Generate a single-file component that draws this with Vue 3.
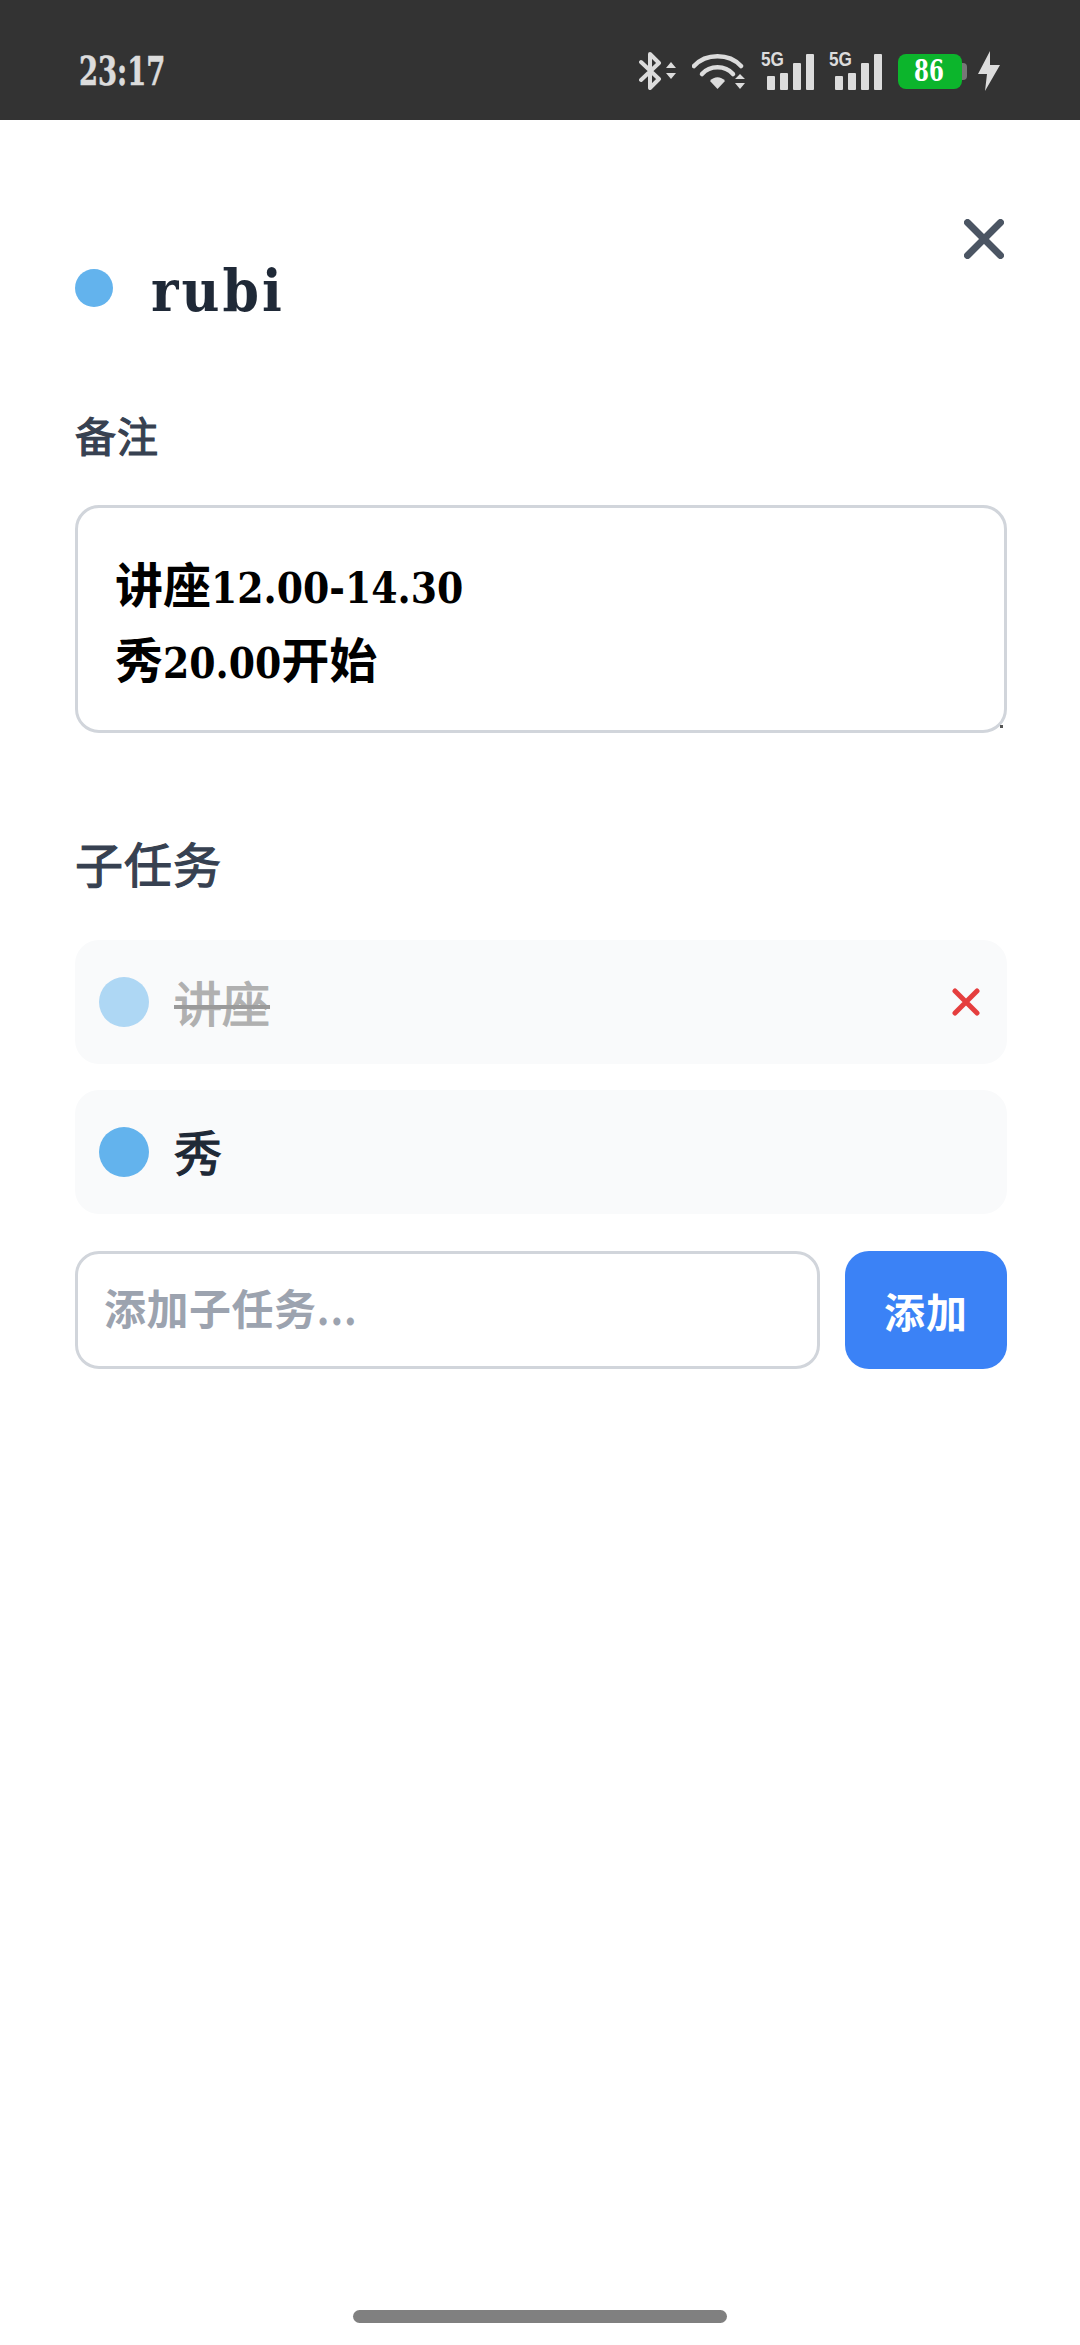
<template>
  <div class="screen">
    <div class="status-bar">
      <span class="clock">23:17</span>
      <div class="status-icons">
        <svg class="ic-bt" width="38" height="38" viewBox="0 0 38 38">
          <path d="M2 10 L20 27 L11 36 V2 L20 11 L2 28" fill="none" stroke="#dcdcdc" stroke-width="4" stroke-linejoin="round" stroke-linecap="round" />
          <path d="M27 16 L32 10 L37 16 Z M27 21 L37 21 L32 27 Z" fill="#dcdcdc" />
        </svg>
        <svg class="ic-wifi" width="54" height="38" viewBox="0 0 54 38">
          <path d="M2 14 C14 1 37 1 49 14" fill="none" stroke="#dcdcdc" stroke-width="4.500" stroke-linecap="round" />
          <path d="M10 22 C18 13 33 13 41 22" fill="none" stroke="#dcdcdc" stroke-width="4.500" stroke-linecap="round" />
          <path d="M18 29 C22 24 29 24 33 29 L25.500 37 Z" fill="#dcdcdc" />
          <path d="M43 27 L48 22 L53 27 Z M43 31 L53 31 L48 37 Z" fill="#dcdcdc" />
        </svg>
        <div v-for="n in 2" :key="n" class="signal">
          <span class="net">5G</span>
          <span v-for="b in bars" :key="b" class="bar" :style="{ height: b + 'px' }"></span>
        </div>
        <div class="battery">
          <span class="battery-level">86</span>
          <span class="battery-nub"></span>
        </div>
        <svg class="ic-bolt" width="22" height="40" viewBox="0 0 22 40">
          <path d="M12 0 L0 23 L9 23 L7 40 L22 14 L12 14 Z" fill="#dcdcdc" />
        </svg>
      </div>
    </div>

    <div class="panel">
      <button class="close-btn" type="button">
        <svg width="40" height="40" viewBox="0 0 40 40">
          <path d="M3.500 3.500 L36.500 36.500 M36.500 3.500 L3.500 36.500" stroke="#4b5563" stroke-width="7" stroke-linecap="round" />
        </svg>
      </button>

      <div class="title-row">
        <span class="title-dot"></span>
        <h1 class="title">rubi</h1>
      </div>

      <label class="note-label">备注</label>
      <div class="note-input">
        <div><span class="cjk">讲座</span>12.00-14.30</div>
        <div><span class="cjk">秀</span>20.00<span class="cjk">开始</span></div>
      </div>

      <h2 class="section-title">子任务</h2>
      <div class="task-list">
        <div v-for="task in tasks" :key="task.id" class="task-item" :class="{ done: task.done }">
          <span class="task-check" @click="task.done = !task.done"></span>
          <span class="task-name">{{ task.name }}</span>
          <svg v-if="task.done" class="task-remove" width="28" height="28" viewBox="0 0 28 28" @click="removeTask(task.id)">
            <path d="M3 3 L25 25 M25 3 L3 25" stroke="#e53e3e" stroke-width="5" stroke-linecap="round" />
          </svg>
        </div>
      </div>

      <form class="add-row" @submit.prevent="addTask">
        <input v-model="newTask" class="add-input" type="text" placeholder="添加子任务..." />
        <button class="add-btn" type="submit">添加</button>
      </form>
    </div>

    <div class="home-bar"></div>
  </div>
</template>

<script setup>
import { ref } from 'vue'

const bars = [14, 17, 27, 36]
const newTask = ref('')
const tasks = ref([
  { id: 1, name: '讲座', done: true },
  { id: 2, name: '秀', done: false }
])

const addTask = () => {
  const name = newTask.value.trim()
  if (!name) return
  tasks.value.push({ id: Date.now(), name, done: false })
  newTask.value = ''
}

const removeTask = (id) => {
  tasks.value = tasks.value.filter(t => t.id !== id)
}
</script>

<style>
body {
  background: #fff;
}
</style>

<style scoped>
.screen {
  position: relative;
  width: 1080px;
  height: 2345px;
  overflow: hidden;
  background: #fff;
  font-family: "DejaVu Serif Condensed", "DejaVu Serif", "Noto Sans CJK SC", serif;
  font-weight: 700;
}

.status-bar {
  height: 120px;
  box-sizing: border-box;
  padding: 22px 80px 0 79px;
  display: flex;
  align-items: center;
  justify-content: space-between;
  background: #333;
  color: #dcdcdc;
}

.clock {
  display: inline-block;
  font-size: 39px;
  line-height: 44px;
  transform: scaleX(0.78);
  transform-origin: left center;
  -webkit-text-stroke: 0.6px #dcdcdc;
}

.status-icons {
  display: flex;
  align-items: center;
}

.ic-wifi {
  margin-left: 15px;
}

.signal {
  position: relative;
  display: flex;
  align-items: flex-end;
  gap: 5.500px;
  width: 47px;
  height: 38px;
  padding-left: 6px;
  margin-left: 15px;
}

.net {
  position: absolute;
  left: 0;
  top: -3px;
  font-family: "Liberation Sans", sans-serif;
  font-size: 21px;
  line-height: 20px;
  transform: scaleX(0.82);
  transform-origin: left top;
}

.bar {
  width: 7.500px;
  background: #dcdcdc;
  border-radius: 1px;
}

.battery {
  position: relative;
  width: 64px;
  height: 35px;
  margin-left: 16px;
  border-radius: 8px;
  background: #0cb52c;
  color: #fff;
  text-align: center;
  font-size: 29px;
  line-height: 35px;
}

.battery-level {
  display: block;
  margin-right: 2px;
  transform: scaleX(0.82);
}

.battery-nub {
  position: absolute;
  right: -5px;
  top: 9px;
  width: 5px;
  height: 17px;
  border-radius: 0 4px 4px 0;
  background: #777;
}

.ic-bolt {
  margin-left: 16px;
}

.panel {
  position: relative;
  padding: 145px 73px 0 75px;
}

.close-btn {
  position: absolute;
  top: 99px;
  right: 76px;
  width: 40px;
  height: 40px;
  padding: 0;
  border: none;
  background: none;
}

.title-row {
  display: flex;
  align-items: center;
  gap: 38px;
  height: 60px;
}

.title-dot {
  width: 38px;
  height: 38px;
  margin-bottom: 14px;
  border-radius: 50%;
  background: #63b3ed;
}

.title {
  margin: 0 0 8px;
  color: #1f2937;
  font-size: 58px;
  line-height: 60px;
  letter-spacing: 3px;
  font-weight: 700;
}

.note-label {
  display: block;
  margin-top: 86px;
  color: #374151;
  font-size: 41px;
  font-weight: 400;
  line-height: 54px;
  letter-spacing: 1px;
  -webkit-text-stroke: 1.2px #374151;
}

.note-input {
  position: relative;
  height: 228px;
  margin-top: 40px;
  padding: 43px 37px 0;
  box-sizing: border-box;
  border: 3px solid #d1d5db;
  border-radius: 24px;
  background: #fff;
  color: #000;
  font-size: 42px;
  line-height: 75px;
}

.note-input::after {
  content: "";
  position: absolute;
  right: 1px;
  bottom: 2px;
  width: 3px;
  height: 3px;
  background: #555;
}

.cjk {
  font-size: 48px;
  line-height: 1;
}

.section-title {
  margin: 105px 0 0;
  color: #374151;
  font-size: 48px;
  line-height: 56px;
  font-weight: 400;
  letter-spacing: 1px;
  -webkit-text-stroke: 1.2px #374151;
}

.task-list {
  display: flex;
  flex-direction: column;
  gap: 26px;
  margin-top: 46px;
}

.task-item {
  display: flex;
  align-items: center;
  gap: 25px;
  height: 124px;
  padding: 0 27px 0 24px;
  border-radius: 24px;
  background: #f9fafb;
}

.task-check {
  flex: none;
  width: 50px;
  height: 50px;
  border-radius: 50%;
  background: #63b3ed;
}

.task-name {
  flex: 1;
  margin-top: -4px;
  color: #1f2937;
  font-size: 48px;
  font-weight: 400;
  -webkit-text-stroke: 1.2px #1f2937;
}

.task-item.done .task-check {
  opacity: 0.5;
}

.task-item.done .task-name {
  margin-top: -2px;
  color: #b0b0b0;
  -webkit-text-stroke: 1.2px #b0b0b0;
  text-decoration: line-through #9a9a9a 4px;
}

.add-row {
  display: flex;
  gap: 25px;
  height: 118px;
  margin-top: 37px;
}

.add-input {
  flex: 1;
  min-width: 0;
  padding: 0 26px;
  box-sizing: border-box;
  border: 3px solid #d1d5db;
  border-radius: 24px;
  outline: none;
  color: #1f2937;
  font: inherit;
  font-size: 42px;
  letter-spacing: 0.5px;
}

.add-input::placeholder {
  color: #9ca3af;
  opacity: 1;
}

.add-btn {
  flex: none;
  width: 162px;
  border: none;
  border-radius: 24px;
  background: #3b82f6;
  color: #fff;
  font: inherit;
  font-size: 41px;
  letter-spacing: 1px;
}

.home-bar {
  position: absolute;
  left: 353px;
  bottom: 22px;
  width: 374px;
  height: 13px;
  border-radius: 7px;
  background: #808080;
}
</style>
